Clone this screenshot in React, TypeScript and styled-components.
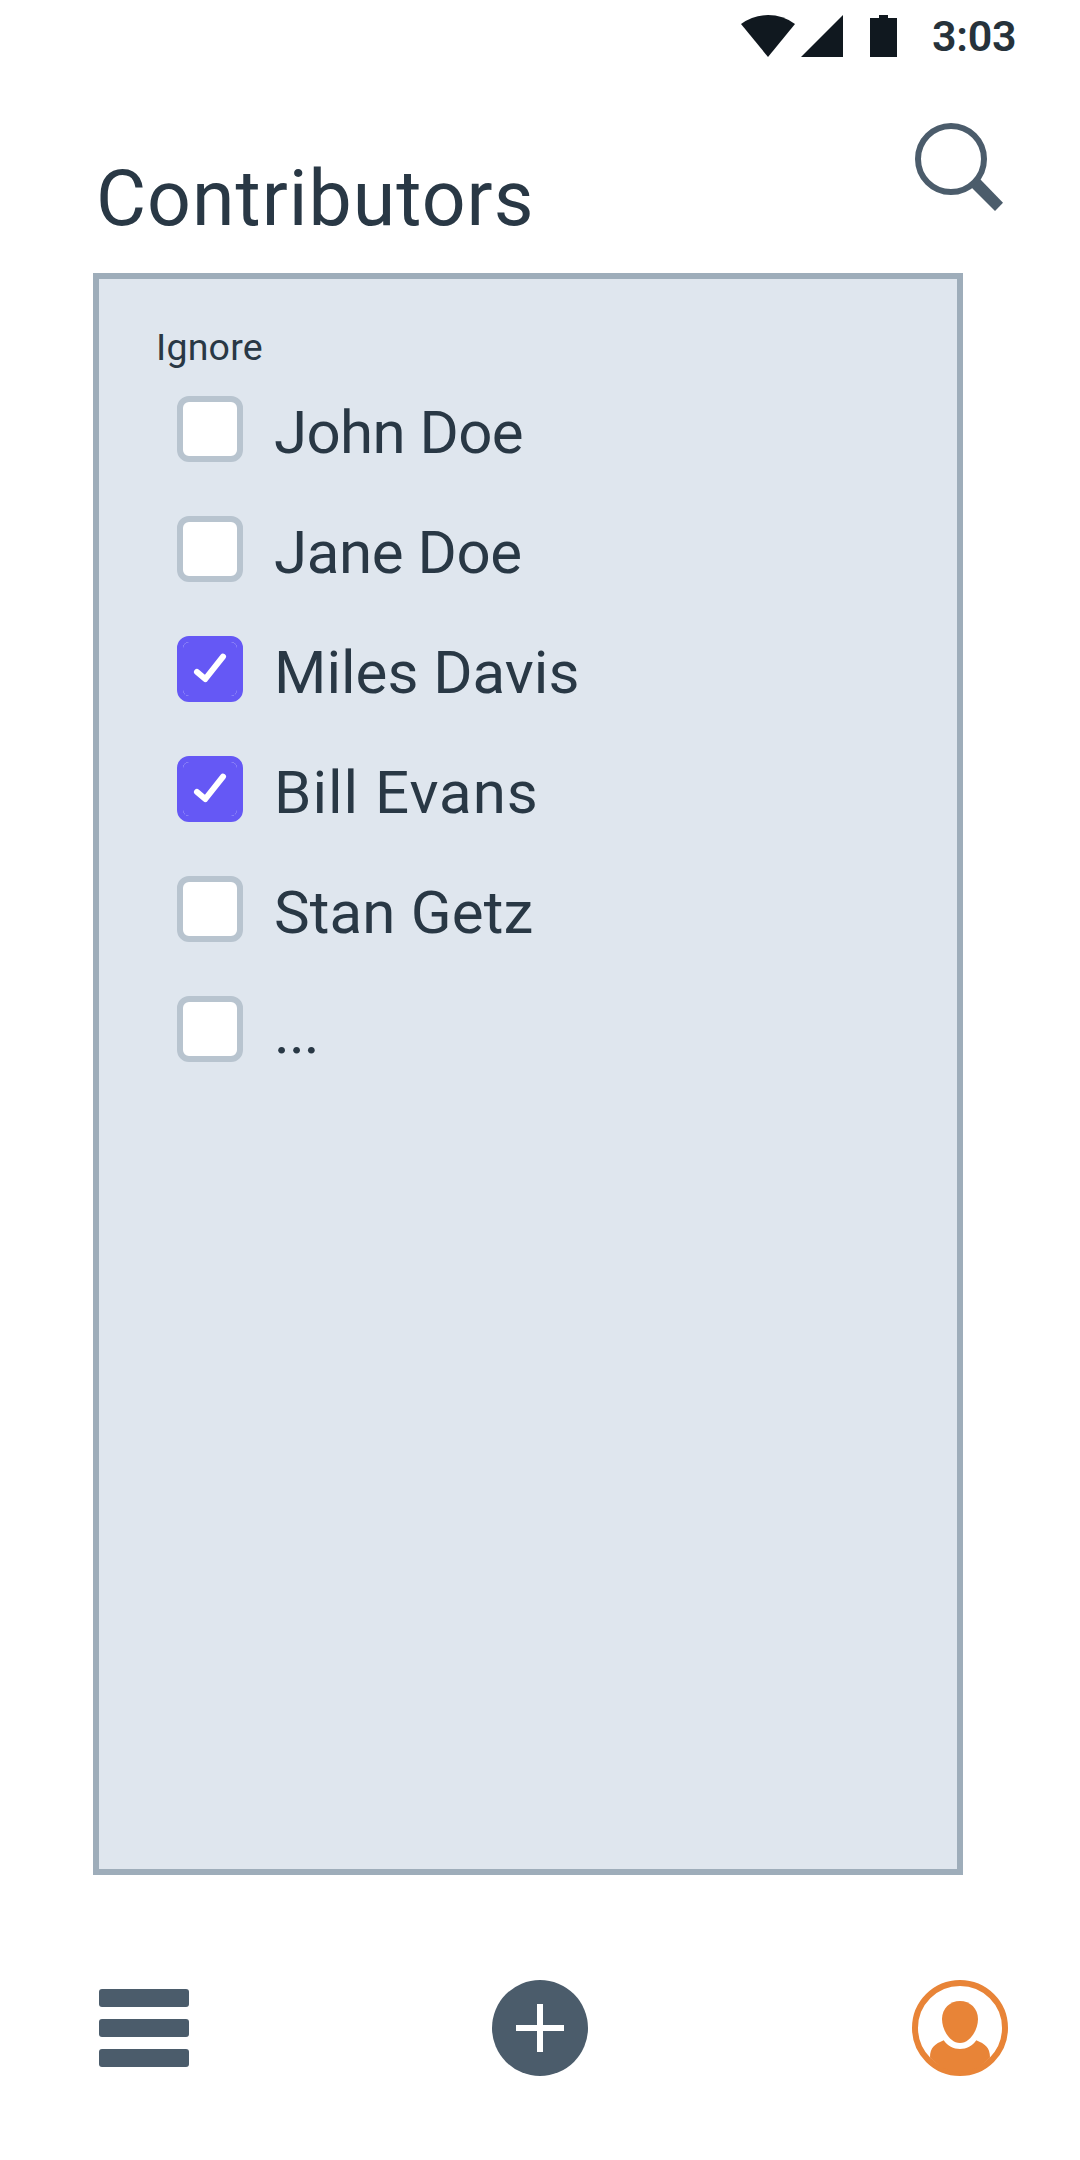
import React, { useState } from "react";
import styled, { createGlobalStyle } from "styled-components";

const GlobalStyle = createGlobalStyle`
  *, *::before, *::after { box-sizing: border-box; }
  body { margin: 0; background: #fff; }
`;

const Screen = styled.div`
  width: 1080px;
  height: 2160px;
  display: flex;
  flex-direction: column;
  background: #fff;
  color: #293845;
  font-family: Roboto, "Liberation Sans", sans-serif;
  overflow: hidden;
`;

const StatusBar = styled.div`
  height: 72px;
  padding: 15px 64px 0 0;
  display: flex;
  justify-content: flex-end;
  align-items: flex-start;
  color: #10181f;
  svg { display: block; flex: none; }
`;

const Signal = styled.svg`
  margin-left: 6px;
`;

const Battery = styled.svg`
  margin-left: 27px;
`;

const Time = styled.time`
  width: 84px;
  margin-left: 35px;
  font-size: 43px;
  line-height: 43px;
  font-weight: 600;
  letter-spacing: -0.3px;
  white-space: nowrap;
  color: #26323b;
`;

const Header = styled.header`
  height: 201px;
  padding: 51px 77px 0 96px;
  display: flex;
  justify-content: space-between;
  align-items: flex-start;
`;

const Title = styled.h1`
  margin: 31px 0 0;
  font-size: 77px;
  line-height: 90px;
  font-weight: 400;
  letter-spacing: 1px;
`;

const IconButton = styled.button`
  display: block;
  padding: 0;
  border: 0;
  background: none;
  cursor: pointer;
  svg { display: block; }
`;

const Panel = styled.main`
  width: 870px;
  height: 1602px;
  margin-left: 93px;
  padding: 43px 57px;
  border: 6px solid #9eadba;
  background: #dfe6ee;
`;

const Caption = styled.div`
  height: 74px;
  font-size: 37.5px;
  line-height: 50px;
  letter-spacing: 0.2px;
`;

const List = styled.ul`
  margin: 0;
  padding: 0 0 0 21px;
  list-style: none;
  display: flex;
  flex-direction: column;
  gap: 54px;
`;

const Row = styled.li`
  height: 66px;
  display: flex;
  align-items: flex-start;
  cursor: pointer;
`;

const Box = styled.span<{ $checked: boolean }>`
  flex: none;
  width: 66px;
  height: 66px;
  border: 6px solid ${(p) => (p.$checked ? "#6558f5" : "#b8c4cf")};
  border-radius: 12px;
  background: #fff;
`;

const Fill = styled.span`
  display: block;
  width: 54px;
  height: 54px;
  border-radius: 6px;
  background: #6558f5;
  svg { display: block; }
`;

const Name = styled.span<{ $tracking: number }>`
  margin: 4px 0 0 31px;
  font-size: 60px;
  line-height: 66px;
  letter-spacing: ${(p) => p.$tracking}px;
  white-space: nowrap;
`;

const Nav = styled.nav`
  height: 96px;
  margin-top: 105px;
  padding: 0 72px 0 99px;
  display: grid;
  grid-template-columns: 393px 1fr auto;
  align-items: center;
  justify-items: start;
`;

const MenuButton = styled(IconButton)`
  width: 90px;
  display: flex;
  flex-direction: column;
  gap: 12px;
`;

const Bar = styled.span`
  height: 18px;
  border-radius: 3px;
  background: #4b5c6b;
`;

const people = [
  { name: "John Doe", checked: false, tracking: -0.6 },
  { name: "Jane Doe", checked: false, tracking: -0.4 },
  { name: "Miles Davis", checked: true, tracking: 0 },
  { name: "Bill Evans", checked: true, tracking: 1 },
  { name: "Stan Getz", checked: false, tracking: 0.15 },
  { name: "...", checked: false, tracking: -0.9 },
];

export default function App() {
  const [ignored, setIgnored] = useState(people.map((p) => p.checked));
  const toggle = (index: number) =>
    setIgnored((list) => list.map((v, i) => (i === index ? !v : v)));

  return (
    <Screen>
      <GlobalStyle />
      <StatusBar>
        <svg width="54" height="42" viewBox="0 0 54 42" fill="currentColor">
          <path d="M0 9Q12 0 27 0T54 9L27 42Z" />
        </svg>
        <Signal width="42" height="42" viewBox="0 0 42 42" fill="currentColor">
          <path d="M42 0V42H0Z" />
        </Signal>
        <Battery width="27" height="42" viewBox="0 0 27 42" fill="currentColor">
          <path d="M9 0H18V3H27V42H0V3H9Z" />
        </Battery>
        <Time>3:03</Time>
      </StatusBar>

      <Header>
        <Title>Contributors</Title>
        <IconButton aria-label="Search">
          <svg width="88" height="88" viewBox="0 0 88 88">
            <circle cx="36" cy="36" r="33" fill="none" stroke="#4b5c6b" strokeWidth="6" />
            <path d="M56.5 64.5L65 56L88 79.7L80 88Z" fill="#4b5c6b" />
          </svg>
        </IconButton>
      </Header>

      <Panel>
        <Caption>Ignore</Caption>
        <List>
          {people.map((person, i) => (
            <Row key={person.name} onClick={() => toggle(i)}>
              <Box $checked={ignored[i]} role="checkbox" aria-checked={ignored[i]}>
                {ignored[i] && (
                  <Fill>
                    <svg width="54" height="54" viewBox="0 0 54 54">
                      <path
                        d="M14 30L22.3 37L40 14.6"
                        fill="none"
                        stroke="#fff"
                        strokeWidth="6"
                        strokeLinecap="round"
                        strokeLinejoin="round"
                      />
                    </svg>
                  </Fill>
                )}
              </Box>
              <Name $tracking={person.tracking}>{person.name}</Name>
            </Row>
          ))}
        </List>
      </Panel>

      <Nav>
        <MenuButton aria-label="Menu">
          <Bar />
          <Bar />
          <Bar />
        </MenuButton>
        <IconButton aria-label="Add">
          <svg width="96" height="96" viewBox="0 0 96 96">
            <circle cx="48" cy="48" r="48" fill="#4b5c6b" />
            <path d="M24 48H72M48 24V72" stroke="#fff" strokeWidth="6" />
          </svg>
        </IconButton>
        <IconButton aria-label="Profile">
          <svg width="96" height="96" viewBox="0 0 96 96" fill="#e88437">
            <circle cx="48" cy="48" r="45" fill="none" stroke="#e88437" strokeWidth="6" />
            <path d="M48 21C58 21 66 28.5 66 39C66 50 58 63 48 63C38 63 30 50 30 39C30 28.5 38 21 48 21Z" />
            <path d="M31.7 60.3C35.5 66 41.5 69 48 69S60.5 66 64.3 60.3C73 64 78 67.5 78 77.5C70 86 60 92 48 92S26 86 18 77.5C18 67.5 23 64 31.7 60.3Z" />
          </svg>
        </IconButton>
      </Nav>
    </Screen>
  );
}
